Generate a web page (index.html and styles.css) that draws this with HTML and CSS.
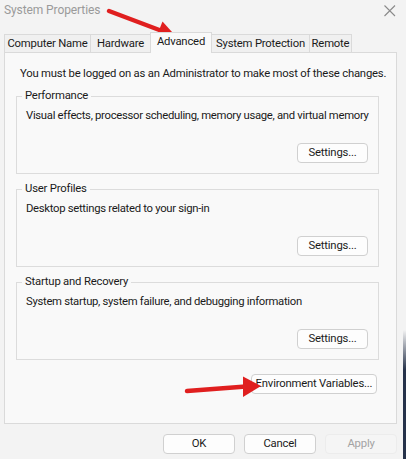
FILE: index.html
```html
<!DOCTYPE html>
<html lang="en">
<head>
<meta charset="utf-8">
<title>System Properties</title>
<link rel="stylesheet" href="styles.css">
</head>
<body>
<div class="window">
  <header class="titlebar">
    <span class="title">System Properties</span>
    <svg class="close" width="12" height="12" viewBox="0 0 12 12" aria-label="Close">
      <path d="M0.5 0.5 L11 11 M11 0.5 L0.5 11" stroke="#8a8a8a" stroke-width="1.1" fill="none"/>
    </svg>
  </header>

  <nav class="tabs">
    <div class="tab tab-computer">Computer Name</div>
    <div class="tab tab-hardware">Hardware</div>
    <div class="tab tab-advanced active">Advanced</div>
    <div class="tab tab-protection">System Protection</div>
    <div class="tab tab-remote">Remote</div>
  </nav>

  <section class="panel">
    <p class="intro">You must be logged on as an Administrator to make most of these changes.</p>

    <fieldset class="group">
      <legend>Performance</legend>
      <p class="desc">Visual effects, processor scheduling, memory usage, and virtual memory</p>
      <div class="group-actions"><button class="btn settings">Settings...</button></div>
    </fieldset>

    <fieldset class="group">
      <legend>User Profiles</legend>
      <p class="desc">Desktop settings related to your sign-in</p>
      <div class="group-actions"><button class="btn settings">Settings...</button></div>
    </fieldset>

    <fieldset class="group">
      <legend>Startup and Recovery</legend>
      <p class="desc">System startup, system failure, and debugging information</p>
      <div class="group-actions"><button class="btn settings">Settings...</button></div>
    </fieldset>

    <div class="env-row"><button class="btn env">Environment Variables...</button></div>
  </section>

  <footer class="footer">
    <button class="btn dlg">OK</button>
    <button class="btn dlg">Cancel</button>
    <button class="btn dlg disabled">Apply</button>
  </footer>
</div>

<svg class="annotations" width="406" height="459" viewBox="0 0 406 459" aria-hidden="true">
  <line x1="109" y1="11" x2="162" y2="31" stroke="#e01f1f" stroke-width="4.5" stroke-linecap="round"/>
  <polygon points="162.5,21.5 155.5,39 177,37.5" fill="#e01f1f"/>
  <line x1="187" y1="391" x2="246" y2="386.5" stroke="#e01f1f" stroke-width="4.5" stroke-linecap="round"/>
  <polygon points="243,376.5 243,397 261,386" fill="#e01f1f"/>
</svg>
</body>
</html>
```

FILE: styles.css
```css
* { box-sizing: border-box; }

html, body {
  margin: 0;
  padding: 0;
}

body {
  width: 406px;
  height: 459px;
  overflow: hidden;
  background: #f3f3f3;
  font-family: Roboto, "Liberation Sans", Arial, sans-serif;
  font-size: 11.3px;
  letter-spacing: -0.2px;
  color: #1a1a1a;
  position: relative;
  white-space: nowrap;
}

body::after {
  content: "";
  position: absolute;
  right: 0;
  top: 330px;
  bottom: 0;
  width: 3px;
  background: linear-gradient(to bottom, rgba(40,52,74,0), #26324a 40px);
}

.window {
  display: flex;
  flex-direction: column;
}

.titlebar {
  height: 32px;
  display: flex;
  align-items: flex-start;
  justify-content: space-between;
  padding: 2px 10px 0 4px;
}

.title {
  font-size: 12px;
  line-height: 17px;
  color: #9a9a9a;
  letter-spacing: -0.1px;
}

.close {
  margin-top: 3px;
}

.tabs {
  display: flex;
  align-items: flex-end;
  height: 21px;
  padding-left: 4px;
}

.tab {
  height: 19px;
  padding: 0;
  text-align: center;
  line-height: 17px;
  background: #f0f0f0;
  border: 1px solid #dadada;
  border-bottom: none;
  margin-right: -1px;
}

.tab-computer { width: 87px; }
.tab-hardware { width: 61px; }
.tab-advanced { width: 62px; }
.tab-protection { width: 99px; }
.tab-remote { width: 43px; }

.tab.active {
  height: 21px;
  line-height: 18px;
  background: #f9f9f9;
  position: relative;
  z-index: 1;
}

.panel {
  margin: -1px 9px 0 4px;
  background: #f9f9f9;
  border: 1px solid #dadada;
  padding: 14px 17px 29px 11px;
}

.intro {
  margin: 0 0 8px 4px;
  line-height: 14px;
}

.group {
  margin: 0 0 8px 0;
  padding: 0 5px 10px 5px;
  border: 1px solid #dcdcdc;
  min-width: 0;
}

.group legend {
  padding: 0 3px;
  line-height: 14px;
}

.desc {
  margin: 6px 0 0 4px;
  line-height: 14px;
  letter-spacing: -0.3px;
}

.group-actions {
  display: flex;
  justify-content: flex-end;
  margin-top: 20px;
  padding-right: 5px;
}

.btn {
  font-family: inherit;
  font-size: 11.3px;
  letter-spacing: -0.2px;
  color: #1a1a1a;
  background: #fdfdfd;
  border: 1px solid #d0d0d0;
  border-radius: 4px;
  height: 20px;
  padding: 0;
  line-height: 18px;
}

.settings {
  width: 71px;
}

.env-row {
  display: flex;
  justify-content: flex-end;
  margin-top: 14px;
  padding-right: 2px;
}

.env {
  width: 126px;
}

.footer {
  display: flex;
  justify-content: flex-end;
  gap: 9px;
  padding: 10px 9px 0 0;
}

.dlg {
  width: 72px;
  height: 20px;
}

.dlg.disabled {
  background: #f5f5f5;
  border-color: #ececec;
  color: #a3a3a3;
}

.annotations {
  position: absolute;
  left: 0;
  top: 0;
  pointer-events: none;
}
```
